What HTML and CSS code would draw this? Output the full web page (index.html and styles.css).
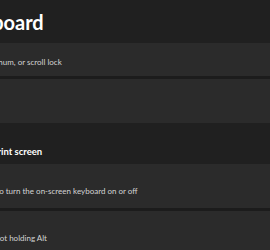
FILE: index.html
```
<!DOCTYPE html>
<html lang="en">
<head>
    <meta charset="UTF-8">
    <title>Keyboard</title>
    <link rel="stylesheet" href="styles.css">
</head>
<body>
    <div class="main">
        <h1 class="crumb"><span class="parent">Accessibility</span> <span class="sep">›</span> Keyboard</h1>

        <div class="group">
            <div class="card single">
                <p class="desc">Play a sound whenever you press caps, num, or scroll lock</p>
            </div>
            <div class="card">
                <p class="title">Notifications</p>
            </div>
        </div>

        <h2 class="section">On-screen keyboard, access keys, and print screen</h2>

        <div class="group">
            <div class="card">
                <p class="title">On-screen keyboard</p>
                <p class="desc">Press the Windows logo key + Ctrl + O to turn the on-screen keyboard on or off</p>
            </div>
            <div class="card">
                <p class="title">Underline access keys</p>
                <p class="desc">Access keys are underlined even when not holding Alt</p>
            </div>
        </div>
    </div>
</body>
</html>
```
FILE: styles.css
```
*{margin:0; padding:0; box-sizing:border-box;}
html, body{
    background: #202020;
    overflow: hidden;
}
body{
    color: #fff;
    font-family: Lato, "Noto Sans", sans-serif;
    font-size: 8px;
    line-height: 11px;
}
.main{
    margin-left: -160px;
    width: 440px;
}
.crumb{
    height: 43px;
    margin-left: -7px;
    padding-top: 8px;
    font-size: 20px;
    line-height: 28px;
    font-weight: bold;
    white-space: nowrap;
}
.crumb .parent{
    color: #cfcfcf;
}
.crumb .sep{
    color: #cfcfcf;
    font-weight: normal;
}
.group{
    display: flex;
    flex-direction: column;
    gap: 3px;
    background: #1c1c1c;
}
.card{
    height: 44px;
    padding: 11px 0 0 19px;
    background: #2b2b2b;
    white-space: nowrap;
}
.card.single{
    height: 33px;
    padding: 14px 0 0 21px;
}
.card .title{
    color: #fff;
}
.card .desc{
    color: #d4d4d4;
}
.section{
    margin-left: -9px;
    padding: 23px 0 7px;
    font-size: 9.5px;
    line-height: 11px;
    font-weight: bold;
    white-space: nowrap;
}
```
